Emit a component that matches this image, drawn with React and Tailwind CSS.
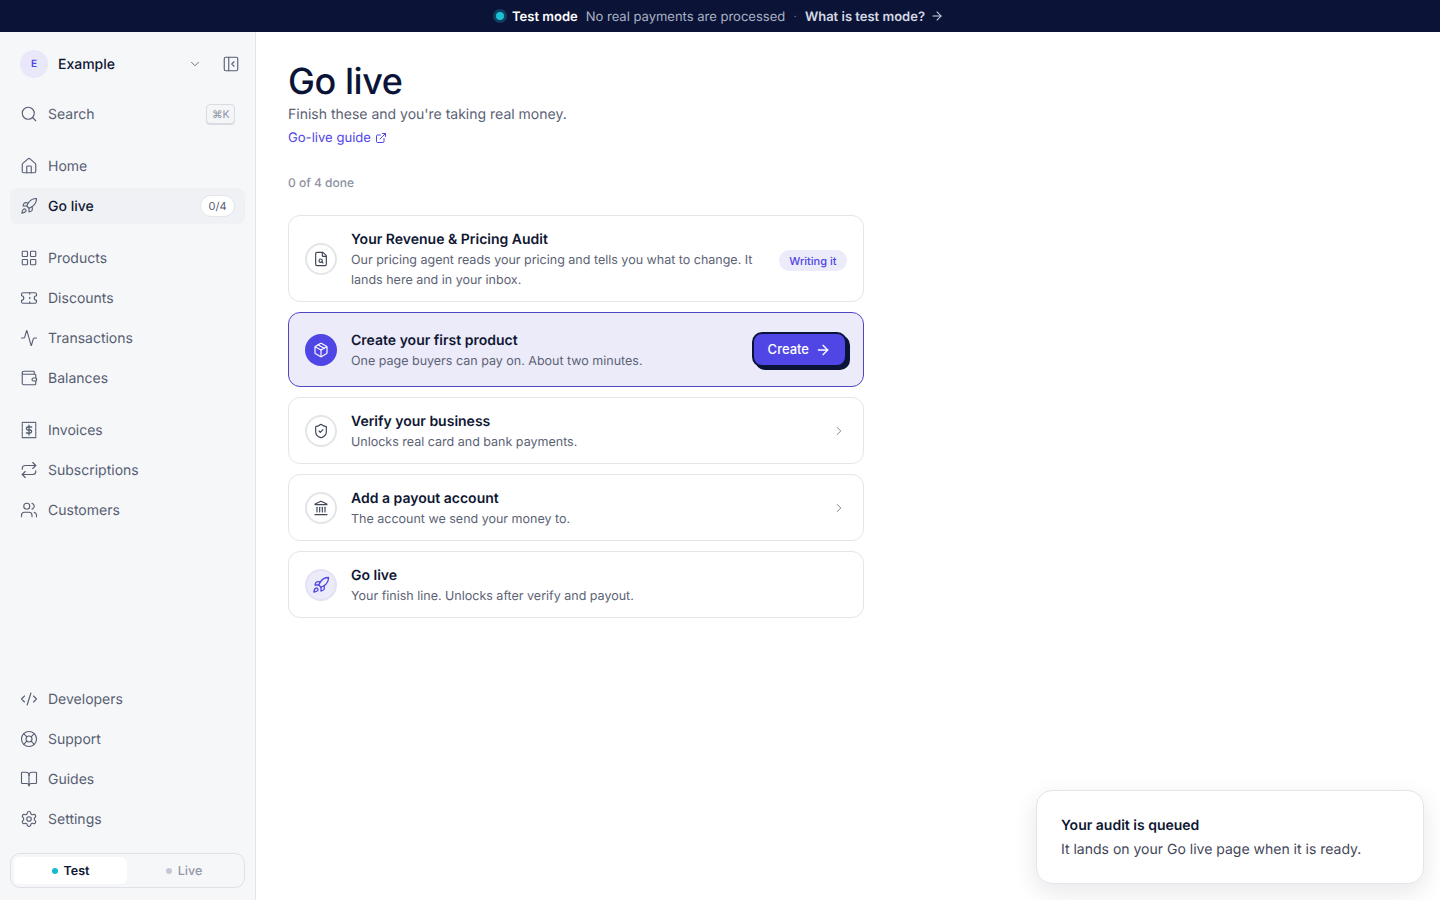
import {
  Activity,
  ArrowRight,
  BookOpen,
  ChevronDown,
  ChevronRight,
  CodeXml,
  ExternalLink,
  FileSearch,
  House,
  Landmark,
  LayoutGrid,
  LifeBuoy,
  Package,
  PanelLeftClose,
  Repeat,
  Rocket,
  Search,
  Settings,
  ShieldCheck,
  Ticket,
  Users,
  Wallet,
} from 'lucide-react';

function InvoiceIcon(props) {
  return (
    <svg viewBox="0 0 24 24" fill="none" stroke="currentColor" strokeWidth={1.5} strokeLinecap="round" strokeLinejoin="round" {...props}>
      <path strokeDasharray="1.2 1.3" d="M3 1.8h18M3 22.2h18M3 1.8v20.4M21 1.8v20.4" />
      <path strokeWidth={1.75} d="M15.5 8h-5a2 2 0 0 0 0 4h3a2 2 0 0 1 0 4h-5M12 5.5v13" />
    </svg>
  );
}

function NavItem({ icon: Icon, label, active, children }) {
  return (
    <a className={`flex h-9 items-center gap-[10px] rounded-lg px-[10px] text-[14px] leading-5 ${active ? 'bg-[#eff1f4] font-medium text-[#0f1733]' : 'text-[#565e72]'}`}>
      <Icon className="h-[18px] w-[18px] shrink-0 text-[#565e72]" strokeWidth={1.5} />
      <span className="flex-1 pt-[2px]">{label}</span>
      {children}
    </a>
  );
}

function Step({ icon: Icon, iconWrap, iconSize = 'h-4 w-4', title, text, children, className = 'border-[#e3e5ea] bg-white py-[10px]' }) {
  return (
    <div className={`flex items-center gap-[14px] rounded-xl border pl-4 pr-4 ${className}`}>
      <div className={`flex h-8 w-8 shrink-0 items-center justify-center rounded-full ${iconWrap}`}>
        <Icon className={iconSize} strokeWidth={1.75} />
      </div>
      <div className="min-w-0 flex-1 pt-[4px]">
        <div className="text-[14px] font-semibold leading-5 text-[#0f1733]">{title}</div>
        <div className="mt-[1px] text-[12.5px] leading-5 text-[#5b6274]">{text}</div>
      </div>
      {children}
    </div>
  );
}

const plainIcon = 'border-2 border-[#e3e5e8] bg-white text-[#3f4658]';

export default function App() {
  return (
    <div className="flex h-[900px] flex-col overflow-hidden bg-white font-['Inter',sans-serif] antialiased [text-rendering:geometricPrecision]">
      {/* Test mode banner */}
      <div className="flex h-8 shrink-0 items-center justify-center bg-[#0b1437] text-[13px] leading-5">
        <span className="mr-[8px] h-[8px] w-[8px] rounded-full bg-[#1cc0d4] shadow-[0_0_0_3px_rgba(28,192,212,0.25)]" />
        <span className="pt-[2px] font-semibold text-white">Test mode</span>
        <span className="ml-2 pt-[2px] text-[#aab1c4]">No real payments are processed</span>
        <span className="mx-2 pt-[2px] text-[#5d6580]">·</span>
        <span className="pt-[2px] font-semibold text-[#d5d9e4]">What is test mode?</span>
        <ArrowRight className="ml-[5px] h-[14px] w-[14px] text-[#d5d9e4]" strokeWidth={1.75} />
      </div>

      <div className="flex min-h-0 flex-1">
        {/* Sidebar */}
        <aside className="flex w-[256px] shrink-0 flex-col border-r border-[#e3e5ea] bg-[#f6f7f9] px-[10px] pb-3">
          <div className="flex h-[64px] shrink-0 items-center pl-[10px] pr-[5px]">
            <div className="flex h-7 w-7 items-center justify-center rounded-full bg-[#e9e8f9] text-[10px] font-semibold text-[#4f46e5]">E</div>
            <span className="ml-[10px] flex-1 pt-[2px] text-[14px] font-medium leading-5 text-[#0f1733]">Example</span>
            <ChevronDown className="h-[14px] w-[14px] text-[#565e72]" strokeWidth={1.5} />
            <PanelLeftClose className="ml-[20px] h-[18px] w-[18px] text-[#565e72]" strokeWidth={1.5} />
          </div>

          <div className="flex h-9 shrink-0 items-center gap-[10px] px-[10px] text-[14px] leading-5 text-[#565e72]">
            <Search className="h-[18px] w-[18px]" strokeWidth={1.5} />
            <span className="flex-1 pt-[2px]">Search</span>
            <kbd className="rounded border border-[#d9dce2] bg-[#f4f5f7] px-[4.5px] pt-[2px] font-['Inter',sans-serif] text-[10.5px] leading-4 text-[#8b91a1] shadow-[0_1px_0_#d9dce2]">⌘K</kbd>
          </div>

          <nav className="mt-4 flex flex-col gap-1">
            <NavItem icon={House} label="Home" />
            <NavItem icon={Rocket} label="Go live" active>
              <span className="rounded-full border border-[#e3e5ea] bg-white px-[7.5px] py-[2px] text-[11px] font-normal leading-4 text-[#565e72]">0/4</span>
            </NavItem>
          </nav>

          <nav className="mt-4 flex flex-col gap-1">
            <NavItem icon={LayoutGrid} label="Products" />
            <NavItem icon={Ticket} label="Discounts" />
            <NavItem icon={Activity} label="Transactions" />
            <NavItem icon={Wallet} label="Balances" />
          </nav>

          <nav className="mt-4 flex flex-col gap-1">
            <NavItem icon={InvoiceIcon} label="Invoices" />
            <NavItem icon={Repeat} label="Subscriptions" />
            <NavItem icon={Users} label="Customers" />
          </nav>

          <nav className="mt-auto flex flex-col gap-1">
            <NavItem icon={CodeXml} label="Developers" />
            <NavItem icon={LifeBuoy} label="Support" />
            <NavItem icon={BookOpen} label="Guides" />
            <NavItem icon={Settings} label="Settings" />
          </nav>

          <div className="mt-[16px] flex h-[35px] shrink-0 items-center rounded-[10px] border border-[#dfe1e6] bg-[#f6f7f9] p-[3px] text-[12.5px] leading-5">
            <div className="flex h-full w-[113px] shrink-0 items-center justify-center gap-[6px] rounded-md bg-white font-semibold text-[#0f1733]">
              <span className="h-[6px] w-[6px] rounded-full bg-[#16b9cf]" />
              <span className="pt-[2px]">Test</span>
            </div>
            <div className="flex h-full flex-1 items-center justify-center gap-[6px] font-medium text-[#9298a8]">
              <span className="h-[6px] w-[6px] rounded-full bg-[#c5c8d2]" />
              <span className="pt-[2px]">Live</span>
            </div>
          </div>
        </aside>

        {/* Main */}
        <main className="relative min-w-0 flex-1 px-8 pt-[28px]">
          <h1 className="text-[36px] font-medium leading-[42px] tracking-[-0.012em] text-[#0b1437]">Go live</h1>
          <p className="mt-[3px] text-[14px] leading-5 text-[#5b6274]">Finish these and you're taking real money.</p>
          <a className="mt-[3px] flex items-center gap-[4px] text-[13.1px] leading-5 text-[#4f46e5]">
            Go-live guide
            <ExternalLink className="h-3 w-3" />
          </a>
          <div className="mt-[27px] text-[12px] font-medium leading-4 text-[#8b91a1]">0 of 4 done</div>

          <div className="mt-[24px] flex w-[576px] flex-col gap-[10px]">
            <Step
              icon={FileSearch}
              iconWrap={plainIcon}
              title="Your Revenue & Pricing Audit"
              text={<>Our pricing agent reads your pricing and tells you what to change. It<br />lands here and in your inbox.</>}
            >
              <span className="mt-[4px] rounded-full bg-[#ecebfa] px-[10.5px] pt-[3px] pb-[1px] text-[11px] font-medium leading-[17px] text-[#4f46e5]">Writing it</span>
            </Step>
            <Step
              icon={Package}
              iconWrap="bg-[#4f46e5] text-white"
              title="Create your first product"
              text="One page buyers can pay on. About two minutes."
              className="border-[#4f46c5] bg-[#ecebfa] py-[14px]"
            >
              <button className="flex h-[35px] items-center gap-[6px] rounded-[10px] border-2 border-[#0b1437] bg-[#4f46e5] px-[14px] text-[13px] font-medium leading-5 text-white shadow-[3px_3px_0_#0b1437]">
                <span className="pb-[2px]">Create</span>
                <ArrowRight className="h-4 w-4" strokeWidth={2} />
              </button>
            </Step>
            <Step icon={ShieldCheck} iconWrap={plainIcon} title="Verify your business" text="Unlocks real card and bank payments.">
              <ChevronRight className="mr-[1px] h-[14px] w-[14px] text-[#6b7285]" strokeWidth={1.5} />
            </Step>
            <Step icon={Landmark} iconWrap={plainIcon} title="Add a payout account" text="The account we send your money to.">
              <ChevronRight className="mr-[1px] h-[14px] w-[14px] text-[#6b7285]" strokeWidth={1.5} />
            </Step>
            <Step icon={Rocket} iconSize="h-[18px] w-[18px]" iconWrap="bg-[#ecebfa] border-2 border-[#e3e2f5] text-[#4f46e5]" title="Go live" text="Your finish line. Unlocks after verify and payout." />
          </div>

          {/* Toast */}
          <div className="absolute bottom-[16px] right-[16px] w-[388px] rounded-2xl border border-[#e3e5ea] bg-white px-6 pt-[23px] pb-[21px] shadow-[0_8px_24px_rgba(15,23,51,0.1)]">
            <div className="text-[14px] font-semibold leading-6 text-[#0f1733]">Your audit is queued</div>
            <div className="text-[14px] leading-6 text-[#3f4658]">It lands on your Go live page when it is ready.</div>
          </div>
        </main>
      </div>
    </div>
  );
}
